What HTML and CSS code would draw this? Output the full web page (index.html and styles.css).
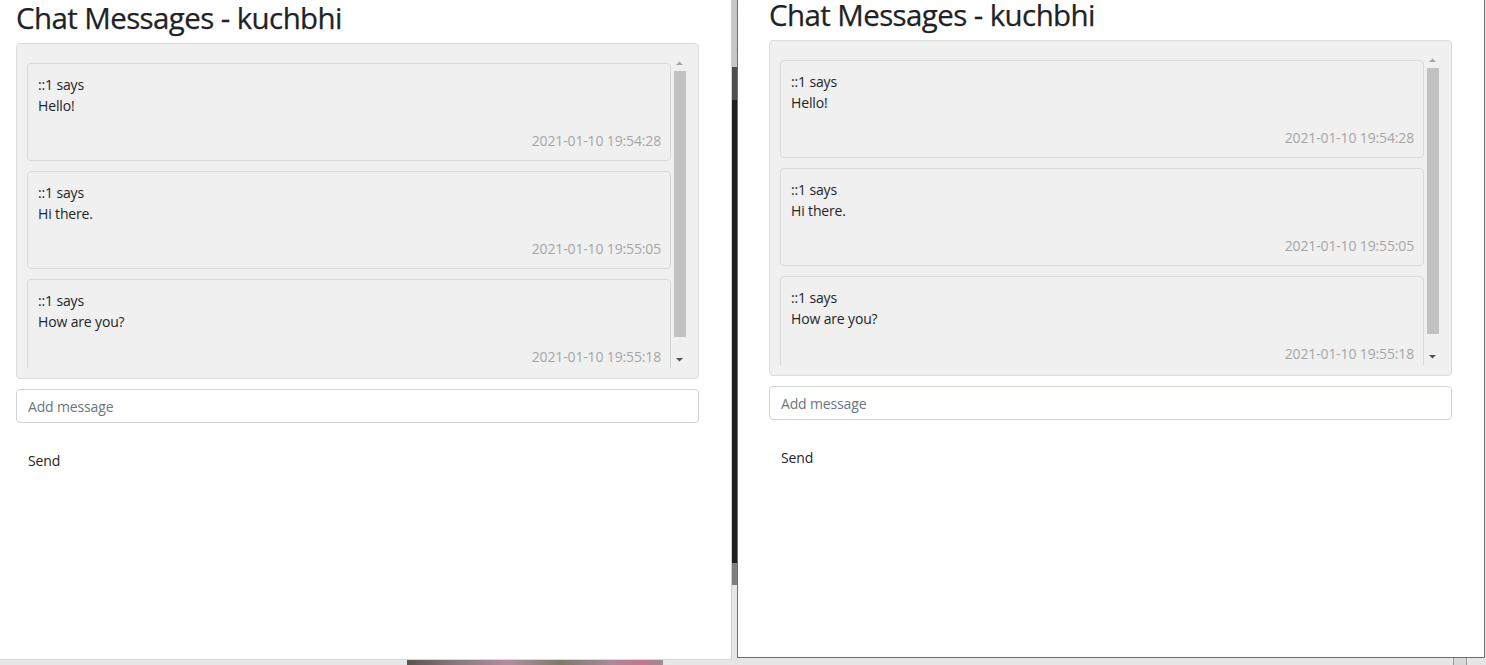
FILE: index.html
```html
<!DOCTYPE html>
<html lang="en">
<head>
<meta charset="utf-8">
<title>Chat Messages - kuchbhi</title>
<link rel="stylesheet" href="styles.css">
</head>
<body>
<div class="desktop">
  <div class="photo"></div>
  <div class="back-window">
    <div class="bw-light"><span>o</span><span>s</span><span>e</span></div>
    <div class="bw-mid"></div>
    <div class="bw-dark"><span>o</span><span>"</span><span>s</span><span>'</span><span>/</span><span class="dim">a</span><span>s</span><span>'</span><span>/</span></div>
    <div class="bw-grey"></div>
  </div>
  <div class="tray-icon"></div>

  <div class="window win-left">
    <div class="page">
      <h2 class="title">Chat Messages - kuchbhi</h2>
      <div class="chat-box">
        <div class="scroller">
          <div class="messages">
            <div class="card">
              <div class="line">::1 says</div>
              <div class="line">Hello!</div>
              <div class="stamp">2021-01-10 19:54:28</div>
            </div>
            <div class="card">
              <div class="line">::1 says</div>
              <div class="line">Hi there.</div>
              <div class="stamp">2021-01-10 19:55:05</div>
            </div>
            <div class="card">
              <div class="line">::1 says</div>
              <div class="line">How are you?</div>
              <div class="stamp">2021-01-10 19:55:18</div>
            </div>
          </div>
          <div class="scrollbar">
            <div class="sb-btn"><svg width="9" height="6" viewBox="0 0 9 6"><path d="M1 5 L4.5 1.5 L8 5 Z" fill="#a3a3a3"/></svg></div>
            <div class="thumb"></div>
            <div class="sb-space"></div>
            <div class="sb-btn"><svg width="9" height="6" viewBox="0 0 9 6"><path d="M1 1 L4.5 4.5 L8 1 Z" fill="#505050"/></svg></div>
          </div>
        </div>
      </div>
      <input class="msg-input" type="text" placeholder="Add message">
      <button class="send" type="button">Send</button>
    </div>
  </div>

  <div class="window win-right">
    <div class="page">
      <h2 class="title">Chat Messages - kuchbhi</h2>
      <div class="chat-box">
        <div class="scroller">
          <div class="messages">
            <div class="card">
              <div class="line">::1 says</div>
              <div class="line">Hello!</div>
              <div class="stamp">2021-01-10 19:54:28</div>
            </div>
            <div class="card">
              <div class="line">::1 says</div>
              <div class="line">Hi there.</div>
              <div class="stamp">2021-01-10 19:55:05</div>
            </div>
            <div class="card">
              <div class="line">::1 says</div>
              <div class="line">How are you?</div>
              <div class="stamp">2021-01-10 19:55:18</div>
            </div>
          </div>
          <div class="scrollbar">
            <div class="sb-btn"><svg width="9" height="6" viewBox="0 0 9 6"><path d="M1 5 L4.5 1.5 L8 5 Z" fill="#a3a3a3"/></svg></div>
            <div class="thumb"></div>
            <div class="sb-space"></div>
            <div class="sb-btn"><svg width="9" height="6" viewBox="0 0 9 6"><path d="M1 1 L4.5 4.5 L8 1 Z" fill="#505050"/></svg></div>
          </div>
        </div>
      </div>
      <input class="msg-input" type="text" placeholder="Add message">
      <button class="send" type="button">Send</button>
    </div>
  </div>
</div>
</body>
</html>
```

FILE: styles.css
```css
* { box-sizing: border-box; }

html, body {
  margin: 0;
  padding: 0;
}

body {
  width: 1486px;
  height: 665px;
  overflow: hidden;
  background: #e4e4e4;
  font-family: "Open Sans", "Noto Sans", sans-serif;
  color: #212529;
}

.desktop {
  position: relative;
  width: 1486px;
  height: 665px;
  background: #e6e6e6;
}

.photo {
  position: absolute;
  left: 407px;
  top: 655px;
  width: 256px;
  height: 10px;
  background: linear-gradient(90deg, #5a5350 0%, #8a7a80 20%, #b08f9c 40%, #7d7a6e 60%, #a88a98 80%, #c07890 92%, #9a8f90 100%);
}

.back-window {
  position: absolute;
  left: 718px;
  top: 0;
  width: 30px;
  height: 665px;
  display: flex;
  flex-direction: column;
  font-family: "DejaVu Sans Mono", monospace;
  font-size: 13px;
}

.bw-light {
  height: 67px;
  background: #c6c6c6;
  color: #505050;
  display: flex;
  flex-direction: column;
  align-items: flex-end;
  padding: 2px 4px 0 0;
  gap: 6px;
  line-height: 14px;
}

.bw-mid {
  height: 33px;
  background: #4e4e4e;
}

.bw-dark {
  height: 463px;
  background: #1e1e1e;
  color: #d7d08a;
  display: flex;
  flex-direction: column;
  align-items: flex-end;
  padding: 90px 4px 0 0;
  gap: 6px;
  line-height: 14px;
}

.bw-dark .dim { color: #6a6a6a; margin: 40px 0; }

.bw-grey {
  height: 22px;
  background: #7f7f7f;
}

.tray-icon {
  position: absolute;
  left: 1453px;
  top: 657px;
  width: 14px;
  height: 8px;
  border: 1px solid #9a9a9a;
  border-bottom: none;
  background: #d8d8d8;
}

.window {
  position: absolute;
  background: #fff;
}

.win-left {
  left: 0;
  top: 0;
  width: 732px;
  height: 660px;
  border-right: 1px solid #cfcfcf;
  border-bottom: 1px solid #d8d8d8;
  padding: 0 0 0 16px;
}

.win-right {
  left: 737px;
  top: -3px;
  width: 748px;
  height: 661px;
  border: 1px solid #6f6f6f;
  border-top: none;
  padding: 0 0 0 31px;
}

.page {
  width: 683px;
  display: flex;
  flex-direction: column;
  align-items: flex-start;
}

.title {
  margin: 0 0 7px 0;
  font-size: 29.5px;
  line-height: 36px;
  font-weight: 500;
  letter-spacing: -0.6px;
  color: #1f2326;
  white-space: nowrap;
  -webkit-text-stroke: 0.25px #1f2326;
}

.chat-box {
  width: 683px;
  height: 336px;
  background: #f0f0f0;
  border: 1px solid #dcdcdc;
  border-radius: 4px;
  padding: 10px;
}

.scroller {
  height: 314px;
  display: flex;
  overflow: hidden;
}

.messages {
  flex: 1;
  overflow: hidden;
  padding-top: 9px;
  display: flex;
  flex-direction: column;
  gap: 10px;
}

.card {
  flex: none;
  border: 1px solid #dadada;
  border-radius: 4px;
  background: #f0f0f0;
  padding: 10px 9px 9px 10px;
  font-size: 14px;
  line-height: 21px;
  letter-spacing: -0.15px;
}

.stamp {
  margin-top: 14px;
  text-align: right;
  color: #a6a6a6;
}

.scrollbar {
  width: 17px;
  flex: none;
  display: flex;
  flex-direction: column;
  align-items: center;
}

.sb-btn {
  height: 17px;
  width: 17px;
  display: flex;
  align-items: center;
  justify-content: center;
}

.thumb {
  width: 12px;
  height: 266px;
  margin-left: 1px;
  background: #c1c1c1;
}

.sb-space { flex: 1; }

.msg-input {
  margin-top: 10px;
  width: 683px;
  height: 34px;
  border: 1px solid #cfd4da;
  border-radius: 4px;
  padding: 0 11px;
  font-family: "Open Sans", "Noto Sans", sans-serif;
  font-size: 14px;
  letter-spacing: -0.15px;
  color: #495057;
  background: #fff;
  outline: none;
}

.msg-input::placeholder {
  color: #6c757d;
}

.send {
  margin-top: 21px;
  border: none;
  background: transparent;
  padding: 6px 12px;
  font-family: "Open Sans", "Noto Sans", sans-serif;
  font-size: 14px;
  line-height: 21px;
  letter-spacing: -0.15px;
  color: #212529;
}
```
